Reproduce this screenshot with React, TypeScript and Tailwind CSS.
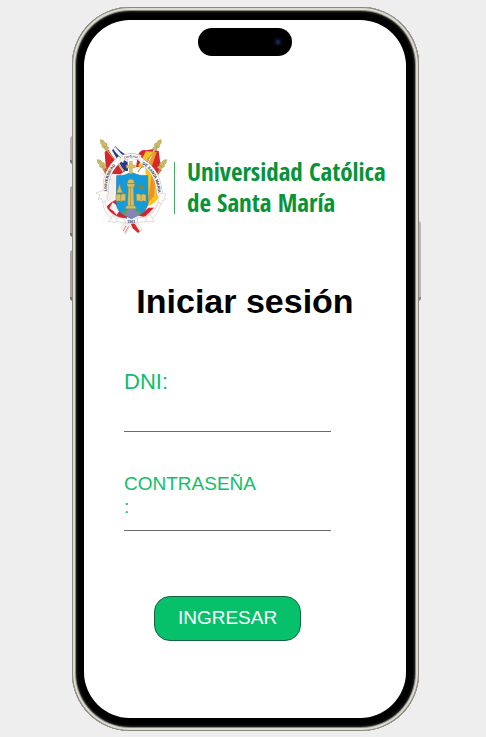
import type { ReactNode } from "react";

function Finial({ x, y, angle }: { x: number; y: number; angle: number }) {
  return (
    <g transform={`translate(${x} ${y}) rotate(${angle})`} fill="#cdb964" stroke="#94803a" strokeWidth="1">
      <path d="M0 -15 L6 -7 L5 2 L9 4 L7 11 L-7 11 L-9 4 L-5 2 L-6 -7 Z" />
      <path d="M-4 11 H4 L7 21 L-7 21 Z" />
    </g>
  );
}

function Crest() {
  return (
    <svg viewBox="0 -3 252 345" className="h-[115px] w-[84px] shrink-0" role="img" aria-label="Escudo">
      <defs>
        <path id="band-left" d="M51 180 Q48 125 92 88" />
        <path id="band-top" d="M103 83 Q124 75 148 83" />
        <path id="band-right" d="M156 99 Q200 126 205 192" />
      </defs>

      {/* left flags */}
      <path d="M44 62 L56 56 L104 120 L84 136 L48 122 Z" fill="#d8262f" />
      <path d="M56 58 L66 60 L104 110 L98 122 Z" fill="#f6f3f1" />
      <path d="M66 58 L76 46 Q88 60 112 74 L114 120 L102 120 Z" fill="#26398c" />
      <path d="M68 52 L76 48 Q90 68 113 84 L113 94 Q86 80 68 52 Z" fill="#f6f3f1" />
      <path d="M36 112 L46 108 L58 128 L48 160 L42 150 Z" fill="#f4efec" />
      <path d="M38 112 L46 108 L52 122 L48 134 Z" fill="#d8262f" />
      <path d="M50 160 L62 128 L90 130 L90 232 L62 224 L48 200 Z" fill="#f5f0ee" />

      {/* right flags */}
      <path d="M144 72 Q152 54 168 58 L192 54 L166 108 L138 108 Z" fill="#d8262f" />
      <path d="M168 60 L190 62 L160 112 L144 106 Z" fill="#f6c322" />
      <path d="M196 58 L206 60 L214 118 L204 132 L172 104 Z" fill="#d8262f" />
      <path d="M192 62 L200 64 L184 110 L170 106 Z" fill="#ef9a28" />
      <path d="M166 112 L204 136 L208 196 Q196 220 172 226 Z" fill="#f9c51f" />
      <path d="M184 134 L196 142 L192 196 L174 214 Z" fill="#ee9126" />

      {/* poles */}
      <g stroke="#b9a24d" strokeWidth="3.5" strokeLinecap="round">
        <path d="M44 50 L104 122" />
        <path d="M202 50 L144 122" />
        <path d="M36 106 L60 146" />
        <path d="M216 106 L192 146" />
      </g>
      <Finial x={40} y={38} angle={-35} />
      <Finial x={205} y={38} angle={35} />
      <Finial x={32} y={97} angle={-40} />
      <Finial x={220} y={97} angle={40} />

      {/* lower drapery */}
      <path d="M46 232 Q66 206 84 206 Q90 236 114 254 L108 266 L60 254 Z" fill="#dc202b" />
      <path d="M68 214 Q82 222 88 240 L80 252 Q70 238 58 232 Z" fill="#f6f2ef" />
      <path d="M140 258 L172 230 Q192 228 204 212 Q206 236 190 248 L150 268 Z" fill="#f4efec" />
      <path d="M146 254 L176 230 L192 230 L164 258 Z" fill="#dc202b" />
      <path d="M92 290 L108 270 L128 276 L106 310 L100 298 Z" fill="#f4f1ef" stroke="#b5b0ac" strokeWidth="1" />
      <path d="M120 272 L140 270 L156 296 L144 306 L128 292 Z" fill="#d8262f" />
      <path d="M130 272 L146 276 L158 292 L150 302 Z" fill="#f4efec" />
      <path d="M100 300 L108 284 M106 304 L116 286" stroke="#cc5356" strokeWidth="2" />

      {/* shield */}
      <path
        d="M80 134 Q103 136 124 124 Q146 136 173 134 L174 216 Q170 240 147 252 L124 263 L102 252 Q80 240 79 216 Z"
        fill="#159bd9"
        stroke="#257cac"
        strokeWidth="2"
      />
      <path d="M98 250 Q108 234 124 232 Q141 234 150 250 L124 263 Z" fill="#8584b8" />
      <path d="M94 246 Q106 236 116 234 L104 252 Z M134 234 Q148 238 155 246 L145 252 Z" fill="#5f9b60" />

      {/* cross above the shield */}
      <path
        d="M118 91 H127 V102 H136 V111 H127 V128 H118 V111 H109 V102 H118 Z"
        fill="#dbc25f"
        stroke="#ab9138"
        strokeWidth="1"
      />

      {/* tower, books, bell and star */}
      <g fill="#d7c063" stroke="#8f843e" strokeWidth="1.2">
        <path d="M115 168 H130 L132 226 H113 Z" />
        <path d="M110 158 H135 L132 168 H113 Z" />
        <path d="M109 225 H136 L139 233 H106 Z" />
        <path d="M112 157 L114 148 L122 144 L131 148 L133 157 Z" />
        <path d="M78 192 Q87 186 93 192 Q100 186 107 190 L106 210 Q98 207 92 212 Q86 207 79 212 Z" />
        <path d="M139 190 Q147 186 153 192 Q161 186 168 192 L168 212 Q160 207 153 212 Q147 207 140 210 Z" />
        <path d="M88 158 L92 172 L98 185 H80 L85 172 Z" />
      </g>
      <path d="M122 170 V225 M92 192 V211 M153 192 V211" stroke="#857b40" strokeWidth="1.5" />
      <path d="M152 157 L155 165 L164 164 L157 170 L162 179 L153 175 L147 181 L149 171 L143 165 L151 166 Z" fill="#7d8a45" />

      {/* ribbon */}
      <g fill="none" stroke="#aaa6a2">
        <path d="M48 184 Q42 122 92 82" strokeWidth="18" />
        <path d="M98 80 Q124 71 152 80" strokeWidth="17" />
        <path d="M156 92 Q206 122 209 194" strokeWidth="18" />
      </g>
      <g fill="none" stroke="#fcfbfa">
        <path d="M48 183 Q42 122 92 82" strokeWidth="16" />
        <path d="M98 80 Q124 71 152 80" strokeWidth="15" />
        <path d="M156 92 Q206 122 209 193" strokeWidth="16" />
      </g>
      <g fill="#fcfbfa" stroke="#b5b0ac" strokeWidth="1.2">
        <path d="M94 74 L103 84 L99 96 L89 88 Z" />
        <path d="M149 74 L162 86 L154 98 L146 88 Z" />
        <path d="M40 178 L56 184 Q48 196 52 206 L38 214 L34 202 L24 206 L30 192 L18 186 Z" />
        <path d="M218 186 L202 190 Q210 204 204 214 L214 220 L218 208 L228 206 L222 196 L229 190 Z" />
        <path d="M44 210 Q50 238 70 250 Q86 262 108 262 L107 276 Q78 275 63 262 Q43 246 38 216 Z" />
        <path d="M205 212 Q198 240 180 250 Q161 261 140 261 L139 275 Q165 276 185 263 Q209 246 211 220 Z" />
        <path d="M66 253 L82 262 L77 275 L54 271 L63 264 Z" />
        <path d="M181 251 L166 260 L171 273 L193 272 L188 264 Z" />
        <path d="M104 262 Q123 267 143 262 L141 276 Q123 281 106 276 Z" />
      </g>
      <g fill="#34302d" fontFamily="'Liberation Sans', Arial, sans-serif" fontWeight="700">
        <text fontSize="12"><textPath href="#band-left">UNIVERSIDAD</textPath></text>
        <text fontSize="8"><textPath href="#band-top">CATÓLICA</textPath></text>
        <text fontSize="12"><textPath href="#band-right">DE SANTA MARÍA</textPath></text>
        <text x="124" y="275" fontSize="11" textAnchor="middle">1961</text>
      </g>
    </svg>
  );
}

function Logo() {
  return (
    <div className="flex pl-[6px]">
      <Crest />
      <div className="mt-8 h-[52px] border-l border-[#45a967] pl-3">
        <p className="-mt-[6px] text-[25px] leading-[31px] whitespace-nowrap text-[#069339] [font-family:'Open_Sans_Condensed','Liberation_Sans_Narrow',sans-serif]">
          Universidad Católica
          <br />
          de Santa María
        </p>
      </div>
    </div>
  );
}

function Phone({ children }: { children: ReactNode }) {
  return (
    <div className="relative w-full max-w-[347px]">
      <span className="absolute top-[129px] -left-[2px] h-[28px] w-[3px] rounded-l-sm border-b-4 border-[#77736b] bg-[#b8b4ad]" />
      <span className="absolute top-[179px] -left-[2px] h-[51px] w-[3px] rounded-l-sm border-b-4 border-[#77736b] bg-[#aaa69f]" />
      <span className="absolute top-[243px] -left-[2px] h-[51px] w-[3px] rounded-l-sm border-b-4 border-[#77736b] bg-[#aaa69f]" />
      <span className="absolute top-[214px] -right-[2px] h-[80px] w-[3px] rounded-r-sm border-b-4 border-[#8b8880] bg-[#bbb8b1]" />
      <div className="relative rounded-[58px] bg-black pt-[13px] pr-[13px] pb-[13px] pl-3 shadow-[inset_0_0_0_1px_#8b8880,inset_0_0_0_3px_#dedbd2,inset_0_0_0_4px_#8a8881,inset_0_0_2px_5px_#272b2b]">
        <div className="relative overflow-hidden rounded-[46px] bg-white">
          <div className="absolute top-2 left-1/2 flex h-7 w-[94px] -translate-x-1/2 items-center justify-end rounded-full bg-black pr-[10px]">
            <span className="flex size-2 items-center justify-center rounded-full bg-[#0b0b20]">
              <span className="size-1 rounded-full bg-[#17245c]" />
            </span>
          </div>
          {children}
        </div>
      </div>
    </div>
  );
}

export default function App() {
  return (
    <main className="flex min-h-screen justify-center bg-[#eeeeee] pt-[7px] pb-[6px] pl-[5px] [font-family:'Liberation_Sans',Arial,sans-serif]">
      <Phone>
        <div className="pt-[110px] pb-[77px]">
          <Logo />
          <h1 className="mt-9 text-center text-[34px] leading-10 font-bold text-black">Iniciar sesión</h1>
          <form className="ml-10 flex w-[207px] flex-col" onSubmit={(event) => event.preventDefault()}>
            <label htmlFor="dni" className="mt-12 text-[22px] leading-[26px] text-[#0fbe6a]">
              DNI:
            </label>
            <input id="dni" type="text" className="h-[37px] border-b border-[#6b6b6b] bg-transparent outline-none" />
            <label
              htmlFor="password"
              className="mt-10 w-[135px] text-[19px] leading-[23px] wrap-anywhere text-[#0fbe6a]"
            >
              CONTRASEÑA:
            </label>
            <input id="password" type="password" className="h-[13px] border-b border-[#6b6b6b] bg-transparent outline-none" />
            <button
              type="submit"
              className="mx-auto mt-[65px] h-[45px] w-[147px] rounded-2xl border border-[#17633f] bg-[#07c06a] text-[19px] text-white"
            >
              INGRESAR
            </button>
          </form>
        </div>
      </Phone>
    </main>
  );
}
